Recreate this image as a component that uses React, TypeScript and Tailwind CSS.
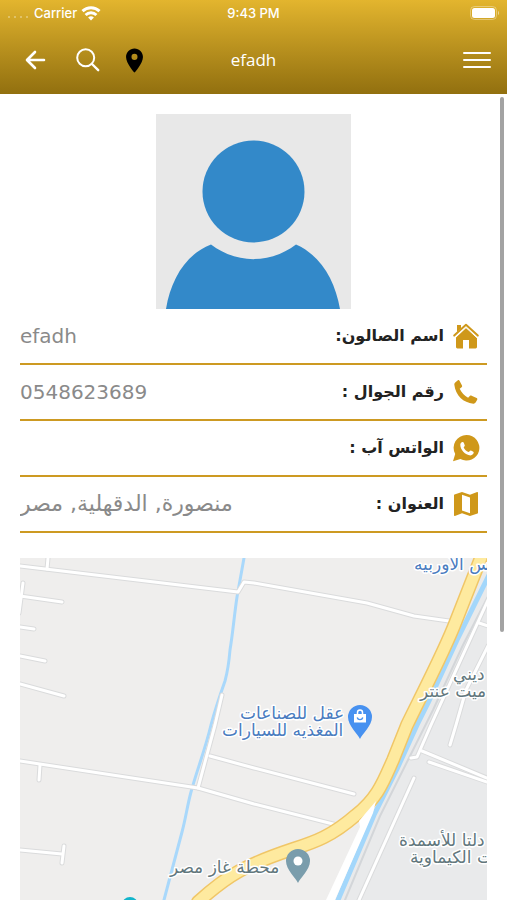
import React from 'react'
import { MdMap, MdPlace } from 'react-icons/md'
import clsx from 'clsx'

interface Field {
  id: string
  label: string
  value: string
  large?: boolean
  icon: React.ReactNode
}

const HomeIcon = () => (
  <svg viewBox="0 0 32 32" className="size-8" fill="currentColor" aria-hidden="true">
    <path d="M7 5h4v3.4L7 12z" />
    <path d="M16 7.6 27 17.4V27a1.4 1.4 0 0 1-1.4 1.4H19V20h-6v8.4H7.4A1.4 1.4 0 0 1 6 27V17.4z" />
    <path
      d="M4.2 15.6 16 4.8l11.8 10.8"
      fill="none"
      stroke="currentColor"
      strokeWidth="2"
      strokeLinecap="round"
      strokeLinejoin="round"
    />
    <path d="M5 17.8 16 7.6l11 10.2" fill="none" stroke="#fff" strokeWidth="1" />
  </svg>
)

const PhoneIcon = () => (
  <svg viewBox="0 0 32 32" className="size-8" fill="currentColor" aria-hidden="true">
    <path d="M5.200 6.400 7.600 4.400c.7-.5 1.500-.4 1.900.3l2.500 4.700c.3.7.2 1.300-.4 1.800l-1.900 1.500c1.900 4 4.700 6.900 8.400 9l1.700-1.700c.5-.5 1.200-.6 1.800-.3l5 2.300c.7.4.9 1 .6 1.700l-1.600 2.900c-.5.8-1.300 1.200-2.300 1.100C13.500 27 5.500 19.500 4.300 8.600c-.1-.9.2-1.700.9-2.200z" />
  </svg>
)

const WhatsappIcon = () => (
  <svg viewBox="0 0 32 32" className="size-8" aria-hidden="true">
    <path
      d="M16.5 3A12.800 12.800 0 1 1 10.400 27L3 29.200l2.200-7.200A12.800 12.800 0 0 1 16.500 3z"
      fill="currentColor"
    />
    <path
      d="M10.3 12.500c.2-1.700 1.500-2.900 2.800-2.500.5.2 1.600 2.900 1.700 3.400.1.800-1.300 1.700-1.100 2.200 1 2.100 2.500 3.600 4.800 4.500.7.2 1.400-1.600 2.200-1.500.8.2 2.900 1.300 3 1.700.3 1.500-1.500 3-3.200 3.100-5.300-.1-10.500-6-10.200-10.900z"
      fill="#fff"
    />
  </svg>
)

const FIELDS: Field[] = [
  { id: 'salon', label: 'اسم الصالون:', value: 'efadh', icon: <HomeIcon /> },
  { id: 'mobile', label: 'رقم الجوال :', value: '0548623689', icon: <PhoneIcon /> },
  { id: 'whatsapp', label: 'الواتس آب :', value: '', icon: <WhatsappIcon /> },
  {
    id: 'address',
    label: 'العنوان :',
    value: 'منصورة, الدقهلية, مصر',
    large: true,
    icon: <MdMap className="size-8" />,
  },
]

const StatusBar = () => (
  <div className="grid h-[26px] grid-cols-3 items-center px-2 font-['Inter',sans-serif] text-[13px] leading-4 font-medium">
    <div className="flex items-center gap-1">
      <span className="mt-2 flex gap-1 opacity-40">
        <i className="size-0.5 rounded-full bg-white" />
        <i className="size-0.5 rounded-full bg-white" />
        <i className="size-0.5 rounded-full bg-white" />
        <i className="size-0.5 rounded-full bg-white" />
      </span>
      <span className="pl-0.5">Carrier</span>
      <svg viewBox="0 0 20 15" className="h-[15px] w-5" fill="none" stroke="#fff" strokeWidth="3">
        <path d="M1.5 5.2a12.3 12.3 0 0 1 17 0" />
        <path d="M4.6 9a7.8 7.8 0 0 1 10.800 0" />
        <path d="M10 14.500 7.100 11.600a4.200 4.200 0 0 1 5.800 0z" fill="#fff" stroke="none" />
      </svg>
    </div>
    <span className="text-center">9:43 PM</span>
    <svg viewBox="0 0 30 14" className="h-3.5 w-[30px] justify-self-end">
      <rect x="1.500" y="0.500" width="26" height="13" rx="4" fill="none" stroke="#fff" strokeOpacity="0.350" />
      <rect x="3" y="2" width="23" height="10" rx="2.500" fill="#fff" />
      <path d="M29 5v4c1.300-.5 1.300-3.500 0-4z" fill="#fff" fillOpacity="0.500" />
    </svg>
  </div>
)

const Header = () => (
  <header className="bg-linear-to-b from-[#e3b52e] to-[#92700f] text-white">
    <StatusBar />
    <div className="grid h-[68px] grid-cols-3 items-center px-4">
      <div className="flex items-center gap-5">
        <button type="button" aria-label="رجوع" className="ml-1">
          <svg viewBox="0 0 32 32" className="size-8" fill="none" stroke="#fff" strokeWidth="2.600" strokeLinecap="round" strokeLinejoin="round">
            <path d="M24 16H7.500M15 8l-8 8 8 8" />
          </svg>
        </button>
        <button type="button" aria-label="بحث">
          <svg viewBox="0 0 32 32" className="size-8" fill="none" stroke="#fff" strokeWidth="2" strokeLinecap="round">
            <circle cx="13.700" cy="13.700" r="8.500" />
            <path d="m20 20 6.200 6.200" strokeWidth="2.400" />
          </svg>
        </button>
        <button type="button" aria-label="الموقع" className="-ml-1 text-black">
          <MdPlace className="size-[29px]" />
        </button>
      </div>
      <h1 className="text-center font-['Open_Sans',sans-serif] text-[17px] leading-6 font-normal">efadh</h1>
      <button type="button" aria-label="القائمة" className="flex w-7 flex-col gap-[5px] justify-self-end">
        <span className="h-0.5 w-full rounded bg-white" />
        <span className="h-0.5 w-full rounded bg-white" />
        <span className="h-0.5 w-full rounded bg-white" />
      </button>
    </div>
  </header>
)

const Avatar = () => (
  <svg viewBox="0 0 195 195" className="mx-auto mt-5 size-[195px] bg-[#e8e8e8]" role="img" aria-label="efadh">
    <circle cx="97.500" cy="77.500" r="51" fill="#3389c9" />
    <path d="M10 195c5-30 20-55 45-64.500 26 19.500 59 19.500 85 0 25 11 39 36 44 64.500z" fill="#3389c9" />
  </svg>
)

const FieldRow = ({ id, label, value, large, icon }: Field) => (
  <div className="flex h-14 items-center justify-between border-b-2 border-[#cd9a22]">
    <input
      id={id}
      readOnly
      defaultValue={value}
      className={clsx(
        "w-56 bg-transparent font-['DejaVu_Sans',sans-serif] leading-7 text-[#8a8a8a] outline-none",
        large ? 'text-[22px]' : 'text-[20px]'
      )}
    />
    <div className="flex items-center gap-1.5 pr-[5px]">
      <label htmlFor={id} dir="rtl" className="font-['DejaVu_Sans',sans-serif] text-base leading-6 font-bold text-[#222]">
        {label}
      </label>
      <span className="text-[#cf981a]">{icon}</span>
    </div>
  </div>
)

// minor roads, drawn twice: grey casing below, white fill above
const ROADS = [
  'M0 8 218 34l6-10 10 1 113 20 47 13 35 5',
  'M28 0l-1 11',
  'M3 25-1 55',
  'M0 38l42 6',
  'M0 69l14 2',
  'M0 98l25 5',
  'M0 126l44 12',
  'M0 203l178 27 56 16 83 21',
  'M20 207l-1 15',
  'M202 137l-7 30-17 63',
  'M190 198l44 12 100 26',
  'M0 292l42 4',
  'M44 288l-2 17',
  'M468 42 411 167l-14 32-6 1',
  'M459 65l9 3',
  'M468 88l-22 44-10 35-6 20',
  'M402 193l65 27',
  'M409 204l58 20',
  'M394 220 339 342',
]

const PLACES = [
  { text: 'س الأوربيه', x: 394, y: 12, fill: '#4a7cc0' },
  { text: 'ديني', x: 433, y: 122, fill: '#62777d' },
  { text: 'ميت عنتر', x: 400, y: 139, fill: '#62777d' },
  { text: 'دلتا للأسمدة', x: 379, y: 288, fill: '#62777d' },
  { text: 'ت الكيماوية', x: 390, y: 305, fill: '#62777d' },
  { text: 'عقل للصناعات', x: 220, y: 161, fill: '#4a7cc0' },
  { text: 'المغذيه للسيارات', x: 202, y: 178, fill: '#4a7cc0' },
  { text: 'محطة غاز مصر', x: 150, y: 315, fill: '#62777d' },
]

const YELLOW = 'M464-8 436 63C425 92 400 140 387 167L373 202C364 222 358 240 336 257C312 278 295 284 273 291C225 307 208 317 178 344'

const MapView = () => (
  <svg viewBox="0 0 467 342" className="mt-[25px] block w-full bg-[#efeeed]" role="img" aria-label="العنوان">
    <path d="M467 0 396 167 345 260 310 342H467z" fill="#e9eaeb" />
    <g fill="none" strokeLinejoin="round" strokeLinecap="round">
      <path
        d="M224 0l-7 39c-3 20-4 35-7 53-1 12-2 20-5 31-6 17-10 29-14 44-6 25-14 45-20 67-4 15-5 25-9 40l-18 68"
        stroke="#a9d8fb"
        strokeWidth="3"
      />
      <path d="M474 27 443 87 413 152 386 206 360 258 325 342" stroke="#d3d6d9" strokeWidth="2" />
      <g stroke="#dadbdc" strokeWidth="5">
        {ROADS.map(d => (
          <path key={d} d={d} />
        ))}
      </g>
      <g stroke="#fff" strokeWidth="3">
        {ROADS.map(d => (
          <path key={d} d={d} />
        ))}
      </g>
      <path d="M472 11 437 82 408 145 397 167 377 211 354 257 318 342" stroke="#a3d7fb" strokeWidth="5" />
      <path d={YELLOW} stroke="#f0c667" strokeWidth="14" />
      <path d={YELLOW} stroke="#feea9f" strokeWidth="11" />
    </g>
    <path d="M356 243l-17 20 1 6-34 73h9l38-87z" fill="#fff" />
    <circle cx="110" cy="347" r="8" fill="#12b5cb" />

    <path d="M340 181c-2-5-12-13-12-22a12 12 0 0 1 24 0c0 9-10 17-12 22z" fill="#4791f0" />
    <path d="M334 156h12v8.500h-12z" fill="#fff" />
    <path d="M337.500 156v-1.500a2.500 2.500 0 0 1 5 0v1.500" fill="none" stroke="#fff" strokeWidth="1.500" />
    <path d="M337.200 159.500a2.900 2.900 0 0 0 5.600 0" fill="none" stroke="#4791f0" strokeWidth="1.400" />

    <path d="M278 325c-2-5-12-13-12-22a12 12 0 0 1 24 0c0 9-10 17-12 22z" fill="#7a9dac" />
    <circle cx="278" cy="303" r="4.500" fill="#fff" />

    <g
      fontSize="17"
      className="font-['DejaVu_Sans',sans-serif]"
      stroke="#fff"
      strokeWidth="3"
      strokeLinejoin="round"
      paintOrder="stroke"
    >
      {PLACES.map(p => (
        <text key={p.text} x={p.x} y={p.y} fill={p.fill}>
          {p.text}
        </text>
      ))}
    </g>
  </svg>
)

export default function App() {
  return (
    <div className="relative min-h-screen bg-white">
      <Header />
      <main className="px-5">
        <Avatar />
        {FIELDS.map(field => (
          <FieldRow key={field.id} {...field} />
        ))}
        <MapView />
      </main>
      {/* scroll indicator */}
      <div className="absolute top-[97px] right-[3px] h-[535px] w-1 rounded-full bg-[#a3a3a3]" />
    </div>
  )
}
